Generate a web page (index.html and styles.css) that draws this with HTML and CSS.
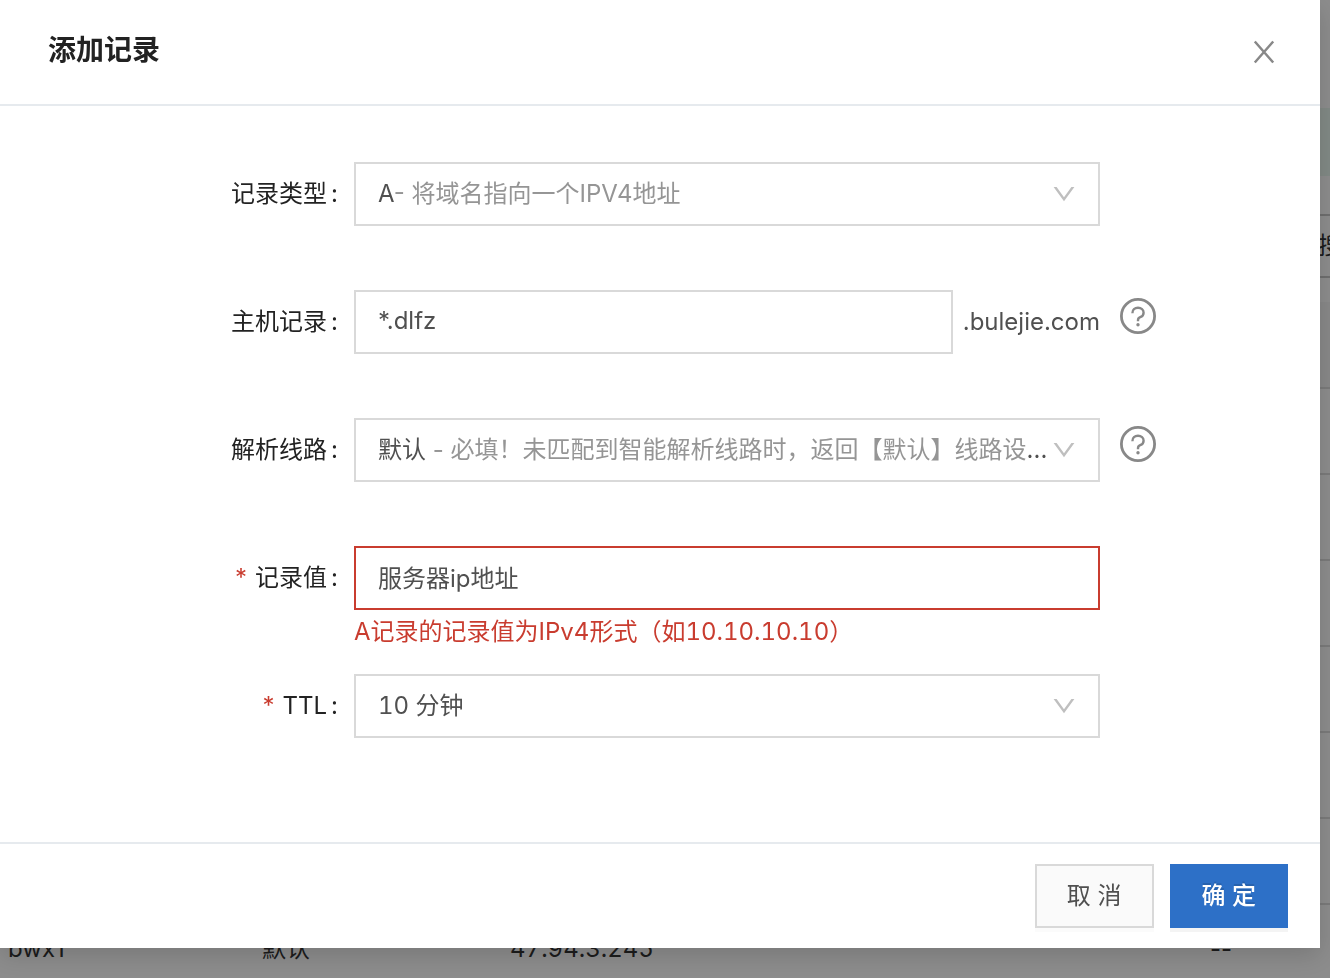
FILE: index.html
```html
<!DOCTYPE html>
<html lang="zh-CN">
<head>
    <meta charset="UTF-8">
    <meta name="viewport" content="width=device-width, initial-scale=1.0">
    <title>添加记录</title>
    <link rel="stylesheet" href="styles.css">
</head>
<body>
    <div class="page">
        <div class="page-notice"></div>
        <div class="page-toolbar">
            <button class="search-button" type="button">搜索</button>
        </div>
        <table class="record-table">
            <thead>
                <tr><th class="col-host"></th><th class="col-line"></th><th class="col-value"></th><th class="col-remark"></th></tr>
            </thead>
            <tbody>
                <tr><td></td><td></td><td></td><td></td></tr>
                <tr><td></td><td></td><td></td><td></td></tr>
                <tr><td></td><td></td><td></td><td></td></tr>
                <tr><td></td><td></td><td></td><td></td></tr>
                <tr><td></td><td></td><td></td><td></td></tr>
                <tr><td></td><td></td><td></td><td></td></tr>
                <tr><td>bwx1</td><td>默认</td><td class="numeric">47.94.3.245</td><td>--</td></tr>
            </tbody>
        </table>
    </div>

    <div class="modal-mask">
        <div class="modal" role="dialog" aria-labelledby="modal-title">
            <div class="modal-header">
                <h1 class="modal-title" id="modal-title">添加记录</h1>
                <button class="modal-close" type="button" aria-label="关闭">
                    <svg width="24" height="24" viewBox="0 0 24 24" fill="none" stroke="currentColor" stroke-width="2.5">
                        <path d="M2.8 1.5L21.2 22.5M21.2 1.5L2.8 22.5"/>
                    </svg>
                </button>
            </div>

            <form class="modal-body" id="record-form">
                <div class="form-item">
                    <label class="form-label" for="record-type">记录类型<span class="colon">:</span></label>
                    <div class="form-field">
                        <div class="select-box">
                            <select class="control" id="record-type">
                                <option>A- 将域名指向一个IPV4地址</option>
                            </select>
                            <div class="select-value" aria-hidden="true">A<span class="hint">- 将域名指向一个IPV4地址</span></div>
                            <svg class="select-arrow" width="22" height="16" viewBox="0 0 22 16"><path d="M0.6 1H3.6L11 11.2L18.4 1H21.4L11 15.2Z"/></svg>
                        </div>
                    </div>
                </div>

                <div class="form-item">
                    <label class="form-label" for="host-record">主机记录<span class="colon">:</span></label>
                    <div class="form-field">
                        <div class="input-group">
                            <input class="control" id="host-record" type="text" value="*.dlfz">
                            <span class="input-suffix">.bulejie.com</span>
                        </div>
                    </div>
                    <button class="help-button" type="button" aria-label="主机记录说明">
                        <svg width="36" height="36" viewBox="0 0 36 36" fill="none" stroke="currentColor">
                            <circle cx="18" cy="18" r="16.6" stroke-width="2.8"/>
                            <path d="M12.4 15.2C12.4 11.8 14.8 9.8 18 9.8S23.6 11.9 23.6 14.7C23.6 17 22.3 18.4 20.2 19.2C18.7 19.8 18 20.8 18 22.2V23.2" stroke-width="2.4"/>
                            <circle cx="18" cy="26.8" r="1.7" fill="currentColor" stroke="none"/>
                        </svg>
                    </button>
                </div>

                <div class="form-item">
                    <label class="form-label" for="line">解析线路<span class="colon">:</span></label>
                    <div class="form-field">
                        <div class="select-box">
                            <select class="control" id="line">
                                <option>默认 - 必填！未匹配到智能解析线路时，返回【默认】线路设...</option>
                            </select>
                            <div class="select-value" aria-hidden="true">默认 <span class="hint">- 必填！未匹配到智能解析线路时，返回【默认】线路设</span>...</div>
                            <svg class="select-arrow" width="22" height="16" viewBox="0 0 22 16"><path d="M0.6 1H3.6L11 11.2L18.4 1H21.4L11 15.2Z"/></svg>
                        </div>
                    </div>
                    <button class="help-button" type="button" aria-label="解析线路说明">
                        <svg width="36" height="36" viewBox="0 0 36 36" fill="none" stroke="currentColor">
                            <circle cx="18" cy="18" r="16.6" stroke-width="2.8"/>
                            <path d="M12.4 15.2C12.4 11.8 14.8 9.8 18 9.8S23.6 11.9 23.6 14.7C23.6 17 22.3 18.4 20.2 19.2C18.7 19.8 18 20.8 18 22.2V23.2" stroke-width="2.4"/>
                            <circle cx="18" cy="26.8" r="1.7" fill="currentColor" stroke="none"/>
                        </svg>
                    </button>
                </div>

                <div class="form-item has-error">
                    <label class="form-label" for="record-value"><span class="required">*</span>记录值<span class="colon">:</span></label>
                    <div class="form-field">
                        <input class="control" id="record-value" type="text" value="服务器ip地址" aria-describedby="value-error">
                        <div class="form-error numeric" id="value-error">A记录的记录值为IPv4形式（如10.10.10.10）</div>
                    </div>
                </div>

                <div class="form-item">
                    <label class="form-label" for="ttl"><span class="required">*</span>TTL<span class="colon">:</span></label>
                    <div class="form-field">
                        <div class="select-box">
                            <select class="control" id="ttl">
                                <option>10 分钟</option>
                            </select>
                            <div class="select-value numeric" aria-hidden="true">10 分钟</div>
                            <svg class="select-arrow" width="22" height="16" viewBox="0 0 22 16"><path d="M0.6 1H3.6L11 11.2L18.4 1H21.4L11 15.2Z"/></svg>
                        </div>
                    </div>
                </div>
            </form>

            <div class="modal-footer">
                <button class="btn" type="button">取 消</button>
                <button class="btn btn-primary" type="submit" form="record-form">确 定</button>
            </div>
        </div>
    </div>
</body>
</html>
```

FILE: styles.css
```css
* {
    box-sizing: border-box;
}

body {
    margin: 0;
    height: 100vh;
    overflow: hidden;
    font-family: Inter, "Noto Sans CJK SC", sans-serif;
    font-size: 24px;
    line-height: 36px;
    color: #505050;
    background-color: #fff;
}

button,
input,
select {
    font: inherit;
    color: inherit;
}

.numeric {
    font-variant-numeric: tabular-nums;
}

/* page under the dialog */
.page {
    padding-top: 108px;
    color: #333;
}

.page-notice {
    height: 68px;
    background-color: #ebfaf2;
}

.page-toolbar {
    display: flex;
    justify-content: flex-end;
    padding: 38px 0 24px;
    margin-right: -64px;
}

.search-button {
    width: 104px;
    height: 64px;
    padding: 0 22px;
    border: 2px solid #c8c8c8;
    background-color: #fff;
    white-space: nowrap;
    text-align: center;
}

.record-table {
    width: 100%;
    table-layout: fixed;
    border-collapse: collapse;
}

.record-table th,
.record-table td {
    height: 86px;
    padding: 4px 8px 0;
    border-bottom: 2px solid #dedede;
    text-align: left;
}

.record-table th {
    background-color: #f7f7f7;
}

.col-host {
    width: 254px;
}

.col-line {
    width: 248px;
}

.col-remark {
    width: 128px;
}

/* dialog */
.modal-mask {
    position: fixed;
    inset: 0;
    padding: 0 10px 30px 0;
    background-color: rgba(0, 0, 0, 0.45);
}

.modal {
    background-color: #fff;
    box-shadow: 0 8px 24px rgba(0, 0, 0, 0.15);
}

.modal-header {
    display: flex;
    align-items: center;
    justify-content: space-between;
    padding: 30px 44px 34px 48px;
    border-bottom: 2px solid #e6eaee;
}

.modal-title {
    margin: 0;
    font-size: 28px;
    font-weight: 600;
    line-height: 40px;
    color: #222;
}

.modal-close,
.help-button {
    display: flex;
    padding: 0;
    border: none;
    background: none;
    color: #888;
    cursor: pointer;
}

.modal-close {
    margin-top: 4px;
}

.modal-body {
    padding: 56px 0 40px;
}

.form-item {
    display: grid;
    grid-template-columns: 340fr 14px 746fr 20px 200fr;
    align-items: start;
    min-height: 128px;
}

.form-label {
    grid-column: 1;
    line-height: 64px;
    text-align: right;
    color: #222;
}

.colon {
    margin: 0 2px 0 4px;
}

.required {
    margin-right: 8px;
    color: #c93c2f;
}

.form-field {
    grid-column: 3;
    min-width: 0;
}

.help-button {
    grid-column: 5;
    margin-top: 8px;
    justify-self: start;
}

.control {
    display: block;
    width: 100%;
    height: 64px;
    padding: 0 22px 4px;
    border: 2px solid #d9d9d9;
    border-radius: 0;
    background-color: #fff;
    outline: none;
}

.has-error .control {
    border-color: #c93c2f;
}

.form-error {
    padding: 4px 0;
    color: #c93c2f;
}

.input-group {
    display: flex;
    align-items: center;
    gap: 10px;
}

.input-group .control {
    flex: 1;
    min-width: 0;
}

.select-box {
    position: relative;
}

.select-box .control {
    appearance: none;
    color: transparent;
}

/* two-tone value drawn over the native select */
.select-value {
    position: absolute;
    inset: 0 48px 0 24px;
    line-height: 64px;
    white-space: nowrap;
    overflow: hidden;
    text-overflow: ellipsis;
    pointer-events: none;
}

.hint {
    color: #959595;
}

.select-arrow {
    position: absolute;
    top: 24px;
    right: 25px;
    fill: #bfbfbf;
    pointer-events: none;
}

.modal-footer {
    display: flex;
    justify-content: flex-end;
    gap: 16px;
    padding: 20px 32px;
    border-top: 2px solid #e6eaee;
}

.btn {
    height: 64px;
    padding: 0 30px;
    border: 2px solid #d9d9d9;
    background-color: #fafafa;
    box-shadow: 0 4px 0 rgba(0, 0, 0, 0.015);
    cursor: pointer;
}

.btn-primary {
    border-color: #2d70c7;
    background-color: #2d70c7;
    box-shadow: 0 4px 0 rgba(0, 0, 0, 0.045);
    color: #fff;
    font-weight: 500;
    text-shadow: 0 -2px 0 rgba(0, 0, 0, 0.12);
}
```
